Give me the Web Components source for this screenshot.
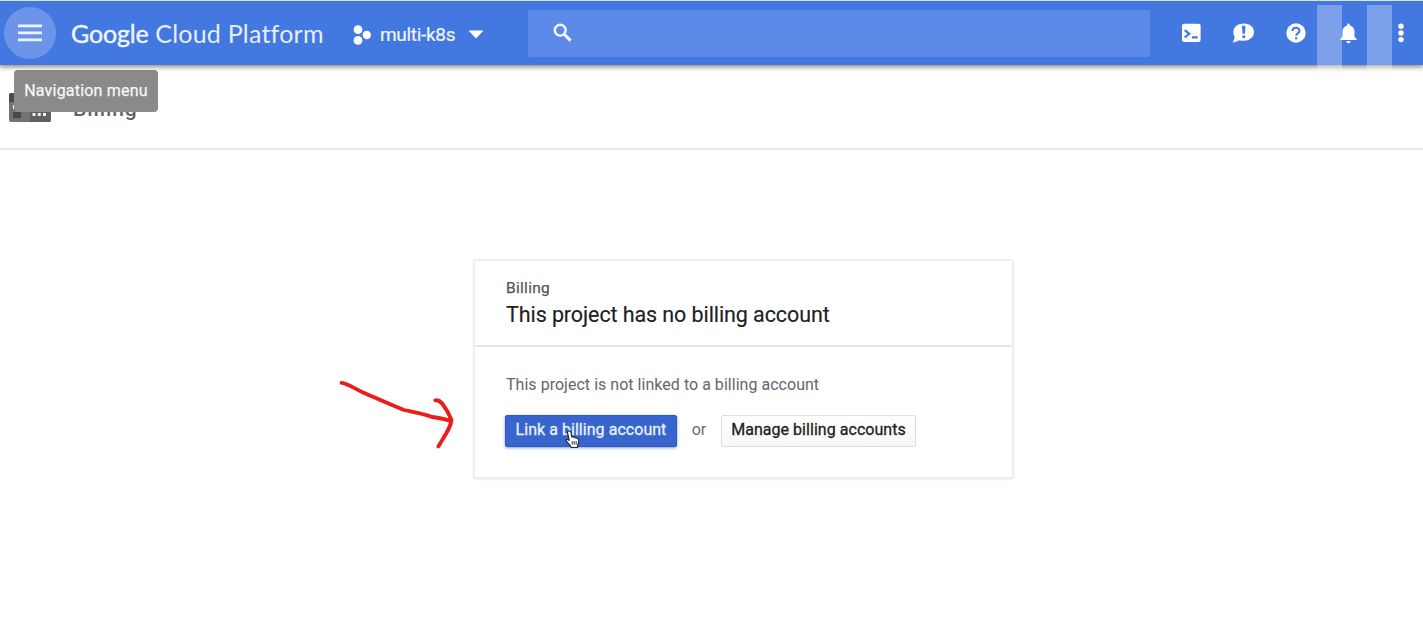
<!DOCTYPE html>
<html lang="en"><head><meta charset="utf-8"><title>Billing</title>
<style>
html,body{margin:0;height:100%;overflow:hidden;background:#fff}
body{font-family:Roboto,"Liberation Sans",sans-serif}
</style></head><body>
<console-page></console-page>
<script>
const define=(name,html)=>customElements.define(name,class extends HTMLElement{
  constructor(){super();this.attachShadow({mode:'open'}).innerHTML=html;}
});

define('console-logo',`<style>
:host{display:block;white-space:nowrap;font:400 25px/30px Lato,sans-serif;color:#e6efff;letter-spacing:.22px}
b{font-weight:400;color:#f0f5ff;letter-spacing:-.15px;-webkit-text-stroke:.4px #f0f5ff}
</style><b>Google</b> Cloud Platform`);

define('project-picker',`<style>
:host{display:flex;align-items:center;color:#eef4ff;font-size:19px;line-height:24px}
svg{display:block;flex:none}
span{margin:0 12px 0 9px;width:76px;white-space:nowrap;letter-spacing:-.3px;-webkit-text-stroke:.2px}
</style>
<svg width="18" height="20" fill="#fff"><circle cx="5" cy="4.7" r="4.4"/><circle cx="5" cy="15.4" r="4.4"/><circle cx="13.800" cy="10" r="4.200"/></svg>
<span><slot></slot></span>
<svg width="16" height="9" fill="#fff"><path d="M.5.5h15L8 8.600z"/></svg>`);

define('search-box',`<style>
:host{display:flex;align-items:center;box-sizing:border-box;width:622px;height:47px;padding:0 0 1px 25px;border-radius:2px;background:#5c8ae8}
svg{display:block}
</style><svg width="20" height="20" fill="none" stroke="#f4f8ff"><circle cx="7.200" cy="7.200" r="5.400" stroke-width="2.400"/><path d="M11.200 11.200l6.400 6.400" stroke-width="3"/></svg>`);

define('tool-icons',`<style>
:host{display:flex;align-items:center}
svg{display:block;flex:none}
</style>
<svg width="20" height="20" style="margin-right:30px"><rect x="0" y=".7" width="18.600" height="18.400" rx="2" fill="#fff"/><path d="M2.700 7.200l4.600 3.600-4.600 3.600M9.900 14.300h5.800" fill="none" stroke="#4278e0" stroke-width="2.200"/></svg>
<svg width="24" height="22" style="margin-right:30px"><path transform="translate(-.6 0)" d="M12.300 1.500C18.300 1.500 22.600 5 22.600 10s-4.300 8.800-10.300 8.800c-1.400 0-2.700-.2-3.900-.6L1.400 20.800l2-5.500C2.400 13.800 2 12 2 10c0-5 4.300-8.500 10.300-8.500z" fill="#fff"/><path d="M9.900 3.800h3.600l-.6 8h-2.400zM10.300 13.500h2.800v2.600h-2.800z" fill="#4278e0"/></svg>
<svg width="20" height="20" style="margin-right:34px"><circle cx="10" cy="10" r="9.700" fill="#fff"/><path d="M6.500 8C6.500 3.600 13.500 3.600 13.500 7.800c0 2.500-3.300 2.400-3.300 5" fill="none" stroke="#4278e0" stroke-width="2"/><rect x="9.100" y="14.200" width="2.200" height="2.200" fill="#4278e0"/></svg>
<svg width="18" height="21" style="margin-right:39px" fill="#fff"><path transform="translate(-.5 0)" d="M7.700 2.400V1.700c0-1.700 2.600-1.700 2.600 0v.7C13.300 3.100 15 5.500 15 8.500v5.200l2.200 2.400v1H.8v-1L3 13.700V8.500c0-3 1.700-5.400 4.700-6.100zM6.900 18h4.200c0 3-4.200 3-4.200 0z"/></svg>
<svg width="8" height="20" fill="#fff"><circle cx="4" cy="3.300" r="2.700"/><circle cx="4" cy="10" r="2.700"/><circle cx="4" cy="16.600" r="2.700"/></svg>`);

define('console-bar',`<style>
:host{display:flex;align-items:center;box-sizing:border-box;position:relative;height:65px;padding:0 0 0 4px;background:#4278e0;border-top:1px solid #d8e4f6;box-shadow:0 1px 5px 1px rgba(0,0,0,.48)}
.menu{width:52px;height:52px;border-radius:50%;background:#6c94e9;flex:none}
.menu svg{display:block}
console-logo{width:253px;margin:0 29px 1px 15px}
project-picker{width:131px;margin:3px 44px 0 0}
search-box{margin:1px 32px 0 0;flex:none}
.bar{position:absolute;top:4px;width:25px;height:64px;background:rgba(255,255,255,.3)}
</style>
<div class="menu"><svg width="52" height="52" fill="#eef4ff"><path d="M14 17.600h24v2.700H14zM14 24.600h24v2.700H14zM14 31.500h24v2.700H14z"/></svg></div>
<console-logo></console-logo>
<project-picker>multi-k8s</project-picker>
<search-box></search-box>
<tool-icons></tool-icons>
<i class="bar" style="left:1317px"></i><i class="bar" style="left:1367px"></i>`);

define('page-heading',`<style>
:host{display:flex;box-sizing:border-box;position:relative;height:85px;padding:28px 0 0 9px;border-bottom:2px solid #e9e9e9}
h1{margin:3px 0 0 22px;font:500 21px/26px Roboto,sans-serif;color:#646464;letter-spacing:.9px}
.tip{position:absolute;left:14px;top:5px;width:144px;height:42px;border-radius:4px;background:#8a8a8a;color:#f6f6f6;font-size:16px;line-height:41px;text-align:center;letter-spacing:.2px;-webkit-text-stroke:.25px;white-space:nowrap}
</style>
<svg width="42" height="29"><rect width="42" height="29" rx="2" fill="#737373"/><path d="M0 2Q0 0 2 0h19v9H0z" fill="#4c4c4c"/><path d="M4 19h8v6H4z" fill="#484848"/><path d="M21 9h21v18q0 2-2 2H21z" fill="#606060"/><path d="M4 12h3v4H4zM23.500 20h3v3h-3zM28.800 20h3v3h-3zM34 20h3v3h-3z" fill="#f1f1f1"/></svg>
<h1>Billing</h1><div class="tip">Navigation menu</div>`);

define('action-button',`<style>
:host{display:block}
button{display:block;box-sizing:border-box;width:100%;height:32px;padding:0 0 2px;border:1px solid #dedede;border-radius:2px;background:linear-gradient(#fff,#f7f7f7);color:#222;font:400 16px/28px Roboto,sans-serif;letter-spacing:.04px;-webkit-text-stroke:.3px;white-space:nowrap}
:host([primary]) button{background:#3765cd;border-color:#3059bb;color:#e9f0ff;box-shadow:0 1px 3px rgba(30,70,160,.55)}
</style><button><slot></slot></button>`);

define('hand-cursor',`<style>:host{display:block}svg{display:block}</style>
<svg width="16" height="19"><path d="M3.600 1C5 .5 6 1.600 6.200 3l.5 3.800c1-.6 1.900-.1 2.200.6.900-.5 1.900-.1 2.200.8 1-.3 2.500.2 2.700 2 .2 3-.6 3.700-1.200 5.300l-.1 2H6.300C5.400 14.700 2 12.400 1 10.400c.2-1.700 2-1.300 3.300.2L2.500 3C2.300 2 2.700 1.300 3.600 1z" fill="#fff" stroke="#252a38" stroke-width="1.200"/><path d="M7.200 11.200v3.400M9.200 11.200v3.400M11.200 11.200v3.400" stroke="#252a38" fill="none"/></svg>`);

define('billing-card',`<style>
:host{display:block;box-sizing:border-box;width:541px;height:220px;border:2px solid #efefef;border-radius:3px;background:#fff;box-shadow:0 1px 2px rgba(0,0,0,.07)}
header{box-sizing:border-box;height:86px;padding:17px 31px 0;border-bottom:2px solid #e6e6e6}
small{display:block;font-size:15.5px;line-height:20px;color:#565656;letter-spacing:.3px;-webkit-text-stroke:.25px}
h2{margin:2px 0 0;font:400 21.5px/30px Roboto,sans-serif;color:#212121;letter-spacing:-.09px;white-space:nowrap;-webkit-text-stroke:.15px}
section{padding:27px 31px 0}
p{margin:0;font-size:16px;line-height:22px;color:#666;letter-spacing:.03px;white-space:nowrap}
.actions{display:flex;align-items:center;margin:19px 0 0 -1px;position:relative}
.actions span{width:44px;text-align:center;color:#6b6b6b;font-size:16px;line-height:28px;padding-bottom:3px}
hand-cursor{position:absolute;left:60px;top:15px}
</style>
<header><small>Billing</small><h2>This project has no billing account</h2></header>
<section><p>This project is not linked to a billing account</p>
<div class="actions"><action-button primary style="width:172px">Link a billing account</action-button><span>or</span><action-button style="width:195px">Manage billing accounts</action-button><hand-cursor></hand-cursor></div></section>`);

define('hand-arrow',`<style>:host{display:block;width:135px;height:85px}svg{display:block}</style>
<svg width="135" height="85" fill="none" stroke="#ea1c1c" stroke-width="3.800" stroke-linecap="round" stroke-linejoin="round"><path d="M11.500 12.800C15 12.500 20 16 33 22.500C47 28.500 61 35 74 40C83 42 93 43.500 102 47C109 47.500 114 49 121 51M105.300 30.300C109 30 111 32 112.500 34C117 40 120 46 121.500 50C121 57 116 64 108.300 76.500"/></svg>`);

define('console-page',`<style>
:host{display:flex;flex-direction:column;position:relative;width:1423px;height:624px;background:#fff;overflow:hidden}
console-bar{z-index:1;flex:none}
page-heading{flex:none}
main{display:flex;padding:109px 0 0 473px}
hand-arrow{position:absolute;left:330px;top:370px}
</style>
<console-bar></console-bar><page-heading></page-heading><main><billing-card></billing-card></main><hand-arrow></hand-arrow>`);
</script></body></html>
